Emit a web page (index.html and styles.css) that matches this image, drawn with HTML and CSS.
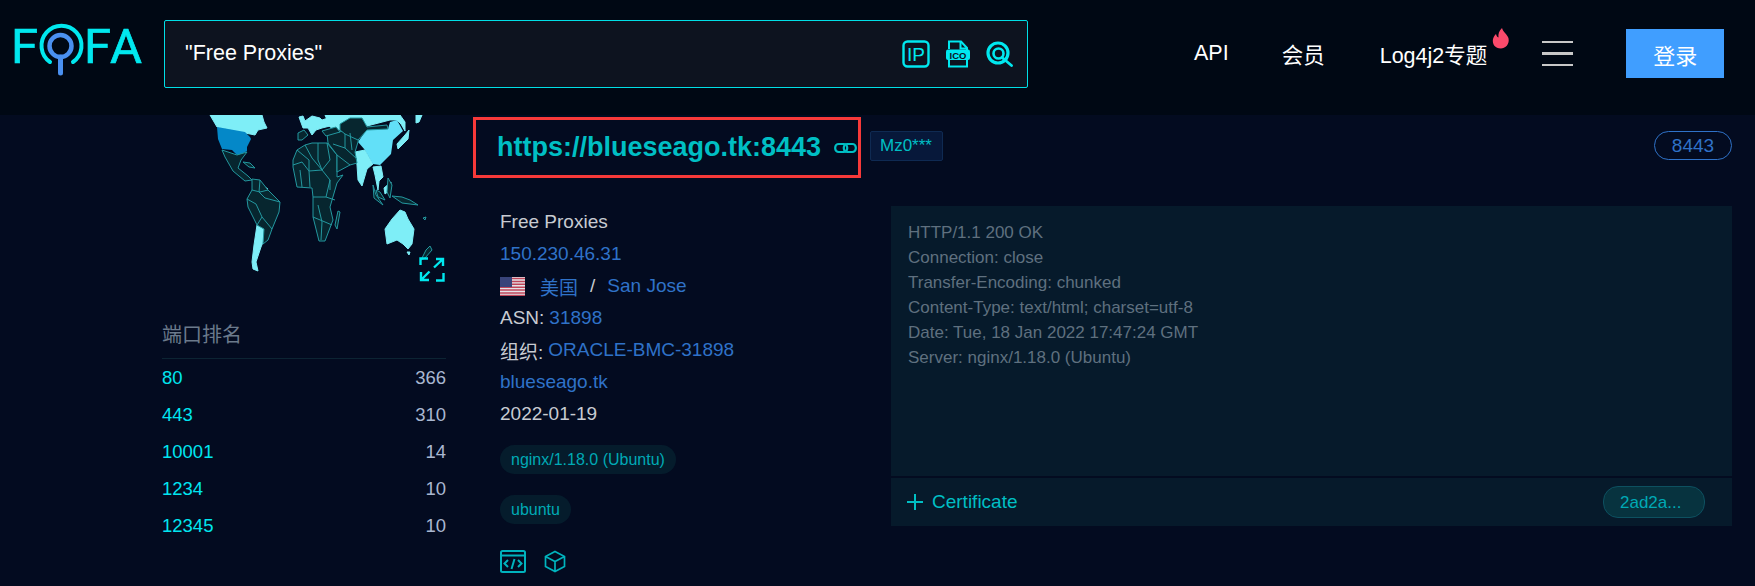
FILE: index.html
```html
<!DOCTYPE html>
<html lang="en">
<head>
    <meta charset="UTF-8">
    <meta name="viewport" content="width=device-width, initial-scale=1.0">
    <title>FOFA</title>
    <link rel="stylesheet" href="styles.css">
</head>
<body>
    <header class="header">
        <svg class="logo" viewBox="0 0 150 107" width="150" height="107">
            <text class="logo-text" x="11" y="63">F</text>
            <path d="M50 62 A20 20 0 1 1 73 62" fill="none" stroke="#00e8ef" stroke-width="4" stroke-linecap="round"/>
            <circle cx="60.5" cy="46" r="11" fill="none" stroke="#4a90f0" stroke-width="4.5"/>
            <line x1="60.5" y1="57" x2="60.5" y2="73" stroke="#4a90f0" stroke-width="5" stroke-linecap="round"/>
            <text class="logo-text" x="84" y="63">F</text>
            <text class="logo-text" x="110" y="63">A</text>
        </svg>

        <div class="search">
            <span class="search-text">"Free Proxies"</span>
            <div class="search-icons">
                <svg width="28" height="28" viewBox="0 0 28 28">
                    <rect x="1.5" y="1.5" width="25" height="25" rx="4" fill="none" stroke="#00e8ef" stroke-width="2.4"/>
                    <text class="ip-text" x="14" y="21">IP</text>
                </svg>
                <svg width="26" height="28" viewBox="0 0 26 28">
                    <path d="M4 9V1.5H16L22 8V26.5H4V20" fill="none" stroke="#00e8ef" stroke-width="2"/>
                    <path d="M15.5 1.5V8.5H22" fill="none" stroke="#00e8ef" stroke-width="2"/>
                    <rect x="1" y="9.5" width="24" height="10.5" rx="2" fill="#00e8ef"/>
                    <text class="ico-text" x="13" y="18.5">ICO</text>
                </svg>
                <svg width="27" height="26" viewBox="0 0 27 26">
                    <circle cx="12" cy="12" r="10" fill="none" stroke="#00e8ef" stroke-width="3.2"/>
                    <circle cx="12.5" cy="12.5" r="5" fill="none" stroke="#00e8ef" stroke-width="2.6"/>
                    <line x1="16" y1="16.5" x2="25.5" y2="24.5" stroke="#00e8ef" stroke-width="2.8" stroke-linecap="round"/>
                </svg>
            </div>
        </div>

        <nav class="nav">
            <a class="nav-api">API</a>
            <a class="nav-vip">会员</a>
            <a class="nav-log">Log4j2专题
                <svg class="flame" width="18" height="21" viewBox="0 0 18 21">
                    <path d="M10 0 C11 4 14 5 16 9 C18 13 16 20 9 20.5 C3 20.5 0 16 1 11 C2 8 3 7 4 6 C4.5 8 5 9 6.5 9.5 C6 6 7 3 10 0Z" fill="#fb4a6b"/>
                </svg>
            </a>
            <div class="hamburger"><span></span><span></span><span></span></div>
            <button class="login">登录</button>
        </nav>
    </header>

    <main class="main">
        <aside class="side">
            <div class="map">
                <svg viewBox="162 115 284 165" width="284" height="165">
                    <g class="land-light">
                        <polygon points="210,115 262,115 264,122 267,128 258,130 255,135 245,133 217,127"/>
                        <polygon points="257,225 264,229 266,235 261,247 256,262 258,271 253,269 252,262 254,245"/>
                        <polygon points="325,115 400,115 405,122 405,131 401,124 397,120 390,120 367,126 362,118 350,118 340,124 340,130 330,127"/>
                        <polygon points="299,117 303,116 305,121 312,116 320,118 322,120 328,118 330,126 322,128 316,130 312,135 308,128 303,128"/>
                        <polygon points="355,152 365,150 373,164 367,169 362,186 358,180 357,165"/>
                        <polygon points="373,167 381,166 383,177 379,181 378,190 375,175"/>
                        <polygon points="384,188 391,182 390,190 385,194"/>
                        <polygon points="397,144 405,135 409,130 408,139 401,146 398,149"/>
                        <polygon points="400,210 405,212 408,219 414,229 412,244 408,249 403,244 397,240 387,244 385,229 392,219"/>
                        <polygon points="416,115 422,115 419,122 416,123"/>
                        <polygon points="407,252 410,252 409,255"/>
                        <polygon points="265,187 268,189 266,191"/>
                    </g>
                    <polygon class="land-us" points="217,127 245,132 250,137 251,139 247,147 247,151 240,155 237,155 232,150 222,149 218,139"/>
                    <polygon class="land-cn" points="367,129 388,129 390,122 397,120 403,131 393,140 391,154 380,165 373,164 365,150 358,142"/>
                    <g class="land-dark">
                        <polygon points="222,150 237,155 247,152 241,160 238,168 248,176 252,180 245,181 233,171 225,157"/>
                        <polygon points="243,162 250,163 255,168 249,167"/>
                        <polygon points="252,179 260,180 268,190 280,202 279,212 272,229 268,240 263,244 264,229 257,225 248,207 247,199 252,190"/>
                        <polygon points="293,160 297,150 305,145 312,143 327,143 337,155 337,177 343,175 337,183 330,207 333,220 325,241 319,241 313,217 313,197 312,188 297,187 293,167"/>
                        <polygon points="327,133 347,131 360,132 358,142 355,152 357,163 350,165 337,172 337,155 328,143"/>
                        <polygon points="340,124 350,118 362,118 367,127 387,125 388,129 367,130 358,140 345,134 340,130"/>
                        <polygon points="298,133 304,130 308,135 302,140 298,140"/>
                        <polygon points="322,131 336,127 340,132 326,136"/>
                        <polygon points="338,211 340,212 337,229 335,225"/>
                        <polygon points="376,190 380,192 385,200 378,197"/>
                        <polygon points="388,178 392,185 390,198 387,192"/>
                        <polygon points="392,196 402,197 410,200 418,205 402,203"/>
                        <polygon points="373,185 376,195 383,205 374,198"/>
                        <polygon points="426,250 430,246 432,250 425,258 421,260"/>
                        <polygon points="423,218 426,217 425,220"/>
                        <polyline points="252,190 260,192 268,190"/>
                        <polyline points="247,199 256,204 262,217 257,225"/>
                        <polyline points="260,180 259,192 265,198 280,202"/>
                        <polyline points="262,217 272,229"/>
                        <polyline points="293,165 302,162 309,171 310,187"/>
                        <polyline points="297,150 309,160 309,171 322,170 330,180 330,190"/>
                        <polyline points="305,145 312,158 322,170"/>
                        <polyline points="318,143 318,160 322,170"/>
                        <polyline points="327,143 330,160 322,170"/>
                        <polyline points="313,197 326,197 335,200"/>
                        <polyline points="326,197 330,180"/>
                        <polyline points="313,217 325,222 332,225"/>
                        <polyline points="318,205 322,222 321,240"/>
                        <polyline points="300,170 302,187"/>
                        <polyline points="345,134 345,148 357,159"/>
                        <polyline points="333,144 345,148"/>
                        <polyline points="337,155 350,165"/>
                        <polyline points="350,133 352,150"/>
                    </g>
                </svg>
                <svg class="expand" width="26" height="25" viewBox="0 0 26 25">
                    <path d="M1.5 8V1.5H9M17 23.5H24.5V16M24 2L15 10.5M2 23L10.5 14.5M17 2H24V9M2 15V23H10" fill="none" stroke="#00e8ef" stroke-width="2.4"/>
                </svg>
            </div>
            <div class="side-title">端口排名</div>
            <div class="port-row"><span class="port-name">80</span><span class="port-count">366</span></div>
            <div class="port-row"><span class="port-name">443</span><span class="port-count">310</span></div>
            <div class="port-row"><span class="port-name">10001</span><span class="port-count">14</span></div>
            <div class="port-row"><span class="port-name">1234</span><span class="port-count">10</span></div>
            <div class="port-row"><span class="port-name">12345</span><span class="port-count">10</span></div>
        </aside>

        <section class="result">
            <div class="result-head">
                <div class="host-box">
                    <a class="host">https://blueseago.tk:8443</a>
                    <svg width="23" height="12" viewBox="0 0 23 12">
                        <rect x="1.2" y="2" width="12" height="8" rx="3.5" fill="none" stroke="#00bfc4" stroke-width="2.2"/>
                        <rect x="9.8" y="2" width="12" height="8" rx="3.5" fill="none" stroke="#00bfc4" stroke-width="2.2"/>
                    </svg>
                </div>
                <span class="hash-tag">Mz0***</span>
                <span class="port-pill">8443</span>
            </div>

            <div class="result-body">
                <div class="info">
                    <div class="info-line">Free Proxies</div>
                    <div class="info-line"><a>150.230.46.31</a></div>
                    <div class="info-line">
                        <svg class="flag" width="25" height="19" viewBox="0 0 25 19">
                            <rect width="25" height="19" fill="#e4e4e8"/>
                            <path d="M0 1.5H25M0 4.4H25M0 7.3H25M0 10.2H25M0 13.1H25M0 16H25M0 18.5H25" stroke="#c0465a" stroke-width="1.5"/>
                            <rect width="12" height="10" fill="#39447a"/>
                        </svg>
                        <a>美国</a><span class="slash">/</span><a>San Jose</a>
                    </div>
                    <div class="info-line">ASN: <a>31898</a></div>
                    <div class="info-line">组织: <a>ORACLE-BMC-31898</a></div>
                    <div class="info-line"><a>blueseago.tk</a></div>
                    <div class="info-line">2022-01-19</div>
                    <span class="tag tag-first">nginx/1.18.0 (Ubuntu)</span>
                    <span class="tag">ubuntu</span>
                    <div class="info-icons">
                        <svg width="26" height="23" viewBox="0 0 26 23">
                            <rect x="1" y="1" width="24" height="21" rx="1.5" fill="none" stroke="#00b3bd" stroke-width="2"/>
                            <line x1="1" y1="5.5" x2="25" y2="5.5" stroke="#00b3bd" stroke-width="2"/>
                            <path d="M8 10L4.5 13.5L8 17M18 10L21.5 13.5L18 17M14.5 9L11.5 19" fill="none" stroke="#00b3bd" stroke-width="2"/>
                        </svg>
                        <svg width="22" height="23" viewBox="0 0 22 23">
                            <path d="M11 1.5L20.5 6.5V16.5L11 21.5L1.5 16.5V6.5ZM1.5 6.5L11 11.5L20.5 6.5M11 11.5V21.5" fill="none" stroke="#00b3bd" stroke-width="1.7"/>
                        </svg>
                    </div>
                </div>

                <div class="detail">
                    <div class="banner">
                        HTTP/1.1 200 OK<br>
                        Connection: close<br>
                        Transfer-Encoding: chunked<br>
                        Content-Type: text/html; charset=utf-8<br>
                        Date: Tue, 18 Jan 2022 17:47:24 GMT<br>
                        Server: nginx/1.18.0 (Ubuntu)
                    </div>
                    <div class="cert">
                        <span class="plus"></span>
                        <span class="cert-label">Certificate</span>
                        <span class="cert-pill">2ad2a...</span>
                    </div>
                </div>
            </div>
        </section>
    </main>
</body>
</html>
```

FILE: styles.css
```css
* {
    box-sizing: border-box;
}
body {
    margin: 0;
    height: 586px;
    overflow: hidden;
    background: #030b20;
    font-family: "Liberation Sans", "Noto Sans CJK SC", sans-serif;
    font-size: 18.5px;
}
.header {
    display: flex;
    align-items: center;
    height: 115px;
    padding-bottom: 8px;
    background: #000814;
}
.logo {
    flex: none;
    margin-right: 14px;
}
.logo-text {
    font-family: "Roboto", sans-serif;
    font-size: 49px;
    fill: #00e8ef;
    stroke: #00e8ef;
    stroke-width: 0.7;
}
.search {
    display: flex;
    align-items: center;
    justify-content: space-between;
    width: 864px;
    height: 68px;
    padding: 0 14px 0 20px;
    background: #0d131f;
    border: 1px solid #00dfe6;
    border-radius: 2px;
}
.search-text {
    color: #fff;
    font-size: 21.5px;
}
.search-icons {
    display: flex;
    align-items: center;
    gap: 15px;
}
.ip-text {
    font-size: 19px;
    fill: #00e8ef;
    text-anchor: middle;
}
.ico-text {
    font-size: 9.5px;
    font-weight: bold;
    fill: #0d131f;
    text-anchor: middle;
}
.nav {
    display: flex;
    align-items: center;
    margin-left: 166px;
    color: #fff;
    font-size: 21.5px;
}
.nav-api {
    margin-right: 53px;
}
.nav-vip {
    margin-right: 55px;
}
.nav-log {
    position: relative;
    margin-right: 55px;
}
.flame {
    position: absolute;
    top: -10px;
    left: 112px;
}
.hamburger {
    display: flex;
    flex-direction: column;
    gap: 9px;
    width: 31px;
    margin-right: 53px;
}
.hamburger span {
    height: 2.5px;
    background: #c8c8c8;
}
.login {
    width: 98px;
    height: 49px;
    padding: 0;
    border: none;
    background: #409eff;
    color: #fff;
    font-family: inherit;
    font-size: 22px;
}
.main {
    display: flex;
    padding-left: 162px;
    padding-right: 23px;
}
.side {
    flex: none;
    width: 284px;
    margin-right: 27px;
}
.map {
    position: relative;
    height: 165px;
}
.map svg {
    display: block;
}
.expand {
    position: absolute;
    right: 1px;
    bottom: -2px;
}
.land-light polygon {
    fill: #7eeef7;
    stroke: #7eeef7;
    stroke-linejoin: round;
}
.land-us {
    fill: #0488c8;
}
.land-cn {
    fill: #62e0f8;
}
.land-dark polygon {
    fill: #07262f;
    stroke: #23979f;
    stroke-width: 1;
    stroke-linejoin: round;
}
.land-dark polyline {
    fill: none;
    stroke: #23979f;
    stroke-width: 1;
}
.side-title {
    margin-top: 40px;
    padding-bottom: 8px;
    border-bottom: 1px solid #0c2433;
    color: #6b7a8c;
    font-size: 20px;
    line-height: 30px;
}
.port-row {
    display: flex;
    justify-content: space-between;
    height: 37px;
    line-height: 37px;
}
.port-name {
    color: #00e6f0;
}
.port-count {
    color: #a9b7d1;
}
.result {
    flex: 1;
    padding-top: 2px;
}
.result-head {
    display: flex;
    align-items: flex-start;
}
.host-box {
    display: flex;
    align-items: center;
    gap: 13px;
    width: 388px;
    height: 61px;
    padding-left: 21px;
    border: 3px solid #f73939;
}
.host {
    color: #00bfc4;
    font-size: 27px;
    font-weight: bold;
}
.hash-tag {
    margin: 14px 0 0 9px;
    padding: 0 10px 0 9px;
    height: 30px;
    line-height: 28px;
    background: #07183a;
    border: 1px solid #0f2a52;
    border-radius: 2px;
    color: #00bfc4;
    font-size: 17px;
}
.port-pill {
    margin: 14px 0 0 auto;
    width: 78px;
    height: 29px;
    line-height: 27px;
    text-align: center;
    border: 1px solid #2f72c8;
    border-radius: 15px;
    color: #2f72c8;
    font-size: 19px;
}
.result-body {
    display: flex;
    margin-top: 28px;
}
.info {
    flex: none;
    width: 418px;
    padding-left: 27px;
    font-size: 19px;
}
.info-line {
    display: flex;
    align-items: center;
    gap: 5px;
    height: 32px;
    color: #c8cbd2;
}
.info-line a {
    color: #2f72c8;
}
.flag {
    margin-right: 10px;
}
.slash {
    margin: 0 7px;
    color: #c8cbd2;
}
.tag {
    display: block;
    width: fit-content;
    height: 29px;
    margin-top: 21px;
    padding: 0 11px;
    line-height: 29px;
    border-radius: 15px;
    background: #051c2c;
    color: #00a9b5;
    font-size: 16px;
}
.tag-first {
    margin-top: 15px;
}
.info-icons {
    display: flex;
    gap: 18px;
    margin-top: 26px;
}
.detail {
    flex: 1;
}
.banner {
    height: 270px;
    padding: 14px 17px;
    background: #061a2b;
    color: #5f707f;
    font-size: 17px;
    line-height: 25px;
}
.cert {
    display: flex;
    align-items: center;
    height: 48px;
    margin-top: 2px;
    padding: 0 27px 0 16px;
    background: #061a2b;
    color: #00bfc4;
    font-size: 19px;
}
.plus {
    width: 16px;
    height: 16px;
    margin-right: 9px;
    background: linear-gradient(#00bfc4, #00bfc4) center / 100% 2px no-repeat,
        linear-gradient(#00bfc4, #00bfc4) center / 2px 100% no-repeat;
}
.cert-pill {
    width: 102px;
    height: 32px;
    margin-left: auto;
    padding-left: 16px;
    line-height: 31px;
    background: #07333f;
    border: 1px solid #0d5060;
    border-radius: 15px;
    color: #00a9b5;
    font-size: 17px;
}
```
